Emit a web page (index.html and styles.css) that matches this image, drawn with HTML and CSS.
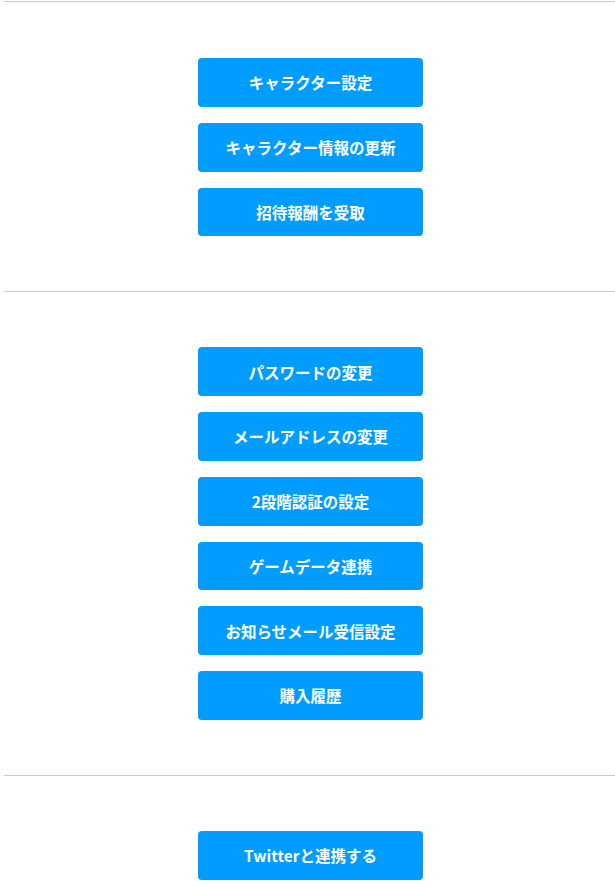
FILE: index.html
```html
<!doctype html>
<html lang="ja">
  <head>
    <meta charset="UTF-8" />
    <meta name="viewport" content="width=device-width, initial-scale=1.0" />
    <title>アカウント設定</title>
    <link rel="stylesheet" href="styles.css">
  </head>
  <body>
    <div class="container">
      <!-- Character -->
      <section class="menu-section">
        <a class="menu-btn" href="#">キャラクター設定</a>
        <a class="menu-btn" href="#">キャラクター情報の更新</a>
        <a class="menu-btn" href="#">招待報酬を受取</a>
      </section>

      <!-- Account -->
      <section class="menu-section">
        <a class="menu-btn" href="#">パスワードの変更</a>
        <a class="menu-btn" href="#">メールアドレスの変更</a>
        <a class="menu-btn" href="#">2段階認証の設定</a>
        <a class="menu-btn" href="#">ゲームデータ連携</a>
        <a class="menu-btn" href="#">お知らせメール受信設定</a>
        <a class="menu-btn" href="#">購入履歴</a>
      </section>

      <!-- SNS -->
      <section class="menu-section">
        <a class="menu-btn" href="#">Twitterと連携する</a>
      </section>
    </div>
  </body>
</html>
```

FILE: styles.css
```css
* {
  margin: 0;
  padding: 0;
  box-sizing: border-box;
}

body {
  font-family: "Noto Sans CJK JP", "Noto Sans", sans-serif;
  background: #fff;
  color: #333;
}

.container {
  padding-top: 1px;
  margin-left: 4px;
}

.menu-section {
  display: flex;
  flex-direction: column;
  align-items: center;
  gap: 16px;
  padding: 55px 0 55px 2px;
  border-top: 1px solid #cccccc;
}

.menu-section:first-child {
  padding-top: 56px;
}

.menu-btn {
  display: flex;
  align-items: center;
  justify-content: center;
  width: 225px;
  height: 48.75px;
  background: #009cff;
  border-radius: 4px;
  color: #fff;
  font-size: 15.5px;
  font-weight: 700;
  text-decoration: none;
}
```
